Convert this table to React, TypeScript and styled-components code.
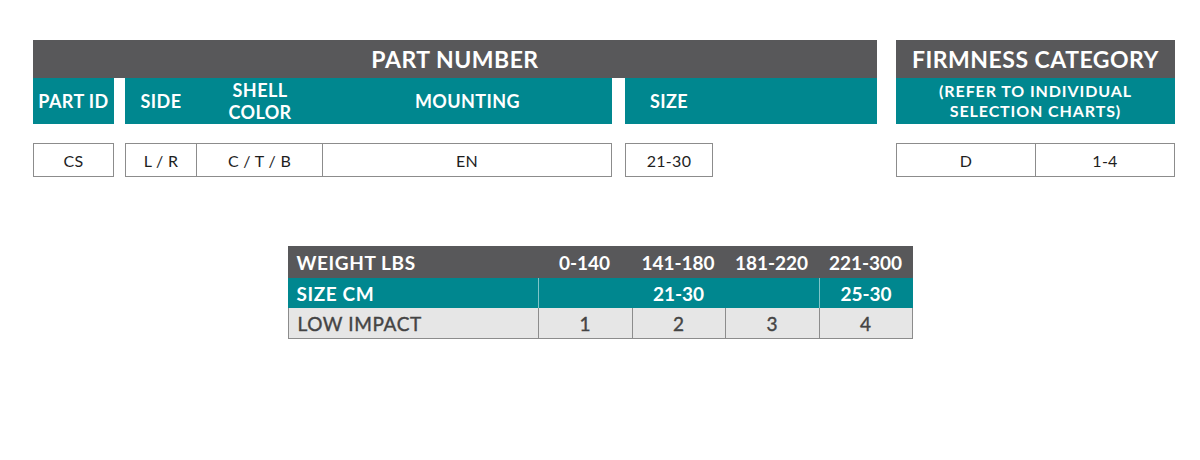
import React from "react";
import styled, { createGlobalStyle } from "styled-components";

const GlobalStyle = createGlobalStyle`
    body {
        margin: 0;
        background: #fff;
        font-family: Lato, "Open Sans", Arial, sans-serif;
    }
`;

const DARK = "#58585a";
const TEAL = "#00878f";
const LINE = "#8c8c8c";

const weights = ["0-140", "141-180", "181-220", "221-300"];
const impact = ["1", "2", "3", "4"];

const App: React.FC = () => {
    return (
        <Page>
            <GlobalStyle />
            <TopRow>
                <PartGrid>
                    <DarkBar $span="1 / -1">PART NUMBER</DarkBar>
                    <TealCell $col="1">PART ID</TealCell>
                    <TealCell $col="3">SIDE</TealCell>
                    <TealCell $col="4">
                        SHELL
                        <br />
                        COLOR
                    </TealCell>
                    <TealCell $col="5">MOUNTING</TealCell>
                    <TealCell $col="7 / 9">
                        <SizeLabel>SIZE</SizeLabel>
                    </TealCell>
                    <Spacer />
                    <DataCell $col="1" $first>
                        CS
                    </DataCell>
                    <DataCell $col="3" $first>
                        L / R
                    </DataCell>
                    <DataCell $col="4">C / T / B</DataCell>
                    <DataCell $col="5">EN</DataCell>
                    <DataCell $col="7" $first>
                        21-30
                    </DataCell>
                </PartGrid>
                <FirmGrid>
                    <DarkBar $span="1 / -1">FIRMNESS CATEGORY</DarkBar>
                    <TealCell $col="1 / -1" $small>
                        (REFER TO INDIVIDUAL
                        <br />
                        SELECTION CHARTS)
                    </TealCell>
                    <Spacer />
                    <DataCell $col="1" $first>
                        D
                    </DataCell>
                    <DataCell $col="2">1-4</DataCell>
                </FirmGrid>
            </TopRow>

            <WeightTable>
                <WeightHead $left>WEIGHT LBS</WeightHead>
                {weights.map((w) => (
                    <WeightHead key={w}>{w}</WeightHead>
                ))}
                <SizeCell $left>SIZE CM</SizeCell>
                <SizeCell $divider $span="2 / 5">
                    21-30
                </SizeCell>
                <SizeCell $divider>25-30</SizeCell>
                <ImpactCell $left>LOW IMPACT</ImpactCell>
                {impact.map((v) => (
                    <ImpactCell key={v}>{v}</ImpactCell>
                ))}
            </WeightTable>
        </Page>
    );
};

export default App;

const Page = styled.div`
    width: 1200px;
    height: 460px;
    padding-top: 40px;
    box-sizing: border-box;
`;

const TopRow = styled.div`
    display: flex;
    align-items: flex-start;
    gap: 19px;
    padding-left: 33px;
`;

const PartGrid = styled.div`
    display: grid;
    grid-template-columns: 81px 11px 72px 126px 289px 13px 88px 164px;
    grid-template-rows: 38px 46px 19px 34px;
`;

const FirmGrid = styled.div`
    display: grid;
    grid-template-columns: 140px 139px;
    grid-template-rows: 38px 46px 19px 34px;
`;

const DarkBar = styled.div<{ $span: string }>`
    grid-column: ${({ $span }) => $span};
    background: ${DARK};
    color: #fff;
    font-weight: 700;
    font-size: 23px;
    letter-spacing: 0.5px;
    display: flex;
    align-items: center;
    justify-content: center;
`;

const TealCell = styled.div<{ $col: string; $small?: boolean }>`
    grid-column: ${({ $col }) => $col};
    grid-row: 2;
    background: ${TEAL};
    color: #fff;
    font-weight: 700;
    font-size: ${({ $small }) => ($small ? "16px" : "18px")};
    letter-spacing: ${({ $small }) => ($small ? "0.9px" : "0.4px")};
    line-height: ${({ $small }) => ($small ? "20px" : "22px")};
    text-align: center;
    display: flex;
    align-items: center;
    justify-content: center;
`;

const SizeLabel = styled.span`
    width: 88px;
    margin-right: auto;
    text-align: center;
`;

const Spacer = styled.div`
    grid-column: 1 / -1;
    grid-row: 3;
`;

const DataCell = styled.div<{ $col: string; $first?: boolean }>`
    grid-column: ${({ $col }) => $col};
    grid-row: 4;
    border: 1px solid ${LINE};
    border-left: ${({ $first }) => ($first ? `1px solid ${LINE}` : "none")};
    color: #1e1e1e;
    font-size: 16px;
    letter-spacing: 0.3px;
    display: flex;
    align-items: center;
    justify-content: center;
`;

const WeightTable = styled.div`
    display: grid;
    grid-template-columns: 250px 94px 93px 94px 94px;
    grid-template-rows: 32px 30px 31px;
    width: 625px;
    margin: 69px auto 0;
`;

const BaseCell = styled.div<{ $left?: boolean; $span?: string }>`
    grid-column: ${({ $span }) => $span || "auto"};
    display: flex;
    align-items: center;
    justify-content: ${({ $left }) => ($left ? "flex-start" : "center")};
    padding-left: ${({ $left }) => ($left ? "9px" : "0")};
    font-size: 19px;
    letter-spacing: ${({ $left }) => ($left ? "0.6px" : "0")};
    box-sizing: border-box;
`;

const WeightHead = styled(BaseCell)`
    background: ${DARK};
    color: #fff;
    font-weight: 700;
`;

const SizeCell = styled(BaseCell)<{ $divider?: boolean }>`
    background: ${TEAL};
    color: #fff;
    font-weight: 700;
    border-left: ${({ $divider }) => ($divider ? "1px solid #7fc4c8" : "none")};
`;

const ImpactCell = styled(BaseCell)`
    background: #e6e6e6;
    color: #444;
    font-weight: 400;
    -webkit-text-stroke: 0.4px #444;
    border-bottom: 1px solid ${LINE};
    border-left: 1px solid ${LINE};
    &:last-child {
        border-right: 1px solid ${LINE};
    }
`;
